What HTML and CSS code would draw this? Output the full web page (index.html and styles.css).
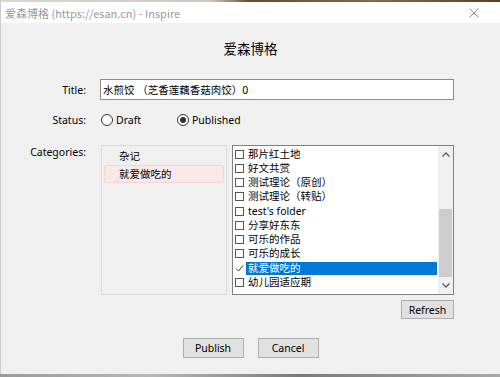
FILE: index.html
```html
<!DOCTYPE html>
<html lang="zh-CN">

<head>
  <meta charset="UTF-8">
  <title>爱森博格 - Inspire</title>
  <link rel="stylesheet" href="styles.css">
</head>

<body>
  <div class="window">
    <div class="desk"></div>

    <div class="titlebar">
      <span class="caption">爱森博格 (https://esan.cn) - Inspire</span>
      <svg class="close" width="10" height="10" viewBox="0 0 10 10">
        <path d="M0.5 0.5 L9.5 9.5 M9.5 0.5 L0.5 9.5" stroke="#8c8c8c" stroke-width="1" fill="none" />
      </svg>
    </div>

    <div class="dialog">
      <h1>爱森博格</h1>

      <div class="row title-row">
        <div class="label">Title:</div>
        <input class="field" type="text" value="水煎饺 （芝香莲藕香菇肉饺）0">
      </div>

      <div class="row status-row">
        <div class="label">Status:</div>
        <div class="radios">
          <span class="radio"><span class="dot"></span>Draft</span>
          <span class="radio checked"><span class="dot"></span>Published</span>
        </div>
      </div>

      <div class="row cat-row">
        <div class="label">Categories:</div>
        <div class="cats">
          <div class="lists">
            <div class="picked">
              <div class="pick">杂记</div>
              <div class="pick active">就爱做吃的</div>
            </div>
            <div class="checklist">
              <div class="items">
                <div class="item"><span class="box"></span><span class="text">那片红土地</span></div>
                <div class="item"><span class="box"></span><span class="text">好文共赏</span></div>
                <div class="item"><span class="box"></span><span class="text">测试理论（原创）</span></div>
                <div class="item"><span class="box"></span><span class="text">测试理论（转贴）</span></div>
                <div class="item"><span class="box"></span><span class="text">test's folder</span></div>
                <div class="item"><span class="box"></span><span class="text">分享好东东</span></div>
                <div class="item"><span class="box"></span><span class="text">可乐的作品</span></div>
                <div class="item"><span class="box"></span><span class="text">可乐的成长</span></div>
                <div class="item selected">
                  <span class="box on">
                    <svg width="9" height="9" viewBox="0 0 9 9">
                      <path d="M1 4.5 L3.5 7 L8 1.5" stroke="#333" stroke-width="1" fill="none" />
                    </svg>
                  </span>
                  <span class="text">就爱做吃的</span>
                </div>
                <div class="item"><span class="box"></span><span class="text">幼儿园适应期</span></div>
              </div>
              <div class="scrollbar">
                <div class="arrow">
                  <svg width="8" height="5" viewBox="0 0 8 5">
                    <path d="M0.5 4.5 L4 1 L7.5 4.5" stroke="#606060" stroke-width="1.4" fill="none" />
                  </svg>
                </div>
                <div class="track">
                  <div class="thumb"></div>
                </div>
                <div class="arrow">
                  <svg width="8" height="5" viewBox="0 0 8 5">
                    <path d="M0.5 0.5 L4 4 L7.5 0.5" stroke="#606060" stroke-width="1.4" fill="none" />
                  </svg>
                </div>
              </div>
            </div>
          </div>
          <div class="refresh-row">
            <button class="btn refresh">Refresh</button>
          </div>
        </div>
      </div>

      <div class="actions">
        <button class="btn wide">Publish</button>
        <button class="btn wide">Cancel</button>
      </div>
    </div>

    <div class="taskbar"></div>
  </div>
</body>

</html>
```

FILE: styles.css
```css
html,
body {
  margin: 0;
  padding: 0;
  background: #f0f0f0;
}

body {
  font-family: "Noto Sans", "Noto Sans CJK SC", sans-serif;
  font-size: 10.5px;
  color: #000;
}

.window {
  width: 500px;
  height: 377px;
  display: flex;
  flex-direction: column;
  overflow: hidden;
}

.desk {
  height: 2px;
  background: linear-gradient(to right, #d9d6d0 0, #cfc9c0 42%, #6a4a2c 50%, #8a6a40 75%, #5c3e22 100%);
}

.titlebar {
  height: 21px;
  background: #fff;
  display: flex;
  align-items: center;
  justify-content: space-between;
  padding: 0 21px 0 4px;
  border-left: 1px solid #c8ccd0;
}

.caption {
  color: #9a9a9a;
  font-size: 11px;
  font-family: "Noto Sans CJK SC", sans-serif;
}

.dialog {
  flex: 1;
  border-left: 1px solid #c8ccd0;
  padding-top: 15px;
}

h1 {
  margin: 0;
  font-size: 13.5px;
  font-weight: normal;
  line-height: 20px;
  text-align: center;
  font-family: "Noto Sans CJK SC", sans-serif;
}

.row {
  display: flex;
  align-items: center;
}

.label {
  width: 85px;
  margin-right: 14px;
  text-align: right;
  line-height: 14px;
}

.title-row {
  margin-top: 21px;
}

.field {
  box-sizing: border-box;
  width: 354px;
  height: 21px;
  margin: 0;
  padding: 0 2px;
  border: 1px solid #8c8c8c;
  background: #fff;
  font-family: "Noto Sans", "Noto Sans CJK SC", sans-serif;
  font-size: 10.5px;
  color: #000;
  outline: none;
}

.status-row {
  margin-top: 12px;
  height: 16px;
}

.radios {
  display: flex;
  align-items: center;
  margin-left: 1px;
}

.radio {
  display: flex;
  align-items: center;
  width: 76px;
}

.dot {
  box-sizing: border-box;
  width: 12px;
  height: 12px;
  margin-right: 3px;
  border: 1px solid #333;
  border-radius: 50%;
  background: #fff;
  display: flex;
  align-items: center;
  justify-content: center;
}

.radio.checked .dot::after {
  content: "";
  width: 6px;
  height: 6px;
  border-radius: 50%;
  background: #333;
}

.cat-row {
  margin-top: 17px;
  align-items: flex-start;
}

.cats {
  width: 354px;
}

.lists {
  display: flex;
  height: 150px;
}

.picked {
  box-sizing: border-box;
  width: 126px;
  margin-left: 1px;
  margin-right: 5px;
  padding: 1px 1px;
  border: 1px solid #dcdcdc;
  background: #f0f0f0;
  font-family: "Noto Sans CJK SC", sans-serif;
}

.pick {
  box-sizing: border-box;
  height: 18px;
  line-height: 16px;
  padding-left: 14px;
  margin: 0 1px;
  border: 1px solid transparent;
}

.pick.active {
  background: #fde8e8;
  border-color: #f6d4d4;
  border-radius: 2px;
}

.checklist {
  box-sizing: border-box;
  flex: 1;
  display: flex;
  border: 1px solid #828282;
  background: #fff;
}

.items {
  flex: 1;
  padding: 1px 0 0 2px;
}

.item {
  display: flex;
  align-items: center;
  height: 14.25px;
}

.box {
  box-sizing: border-box;
  width: 9px;
  height: 9px;
  border: 1px solid #555;
  background: #fff;
  margin-right: 2px;
  display: flex;
  align-items: center;
  justify-content: center;
  flex: none;
}

.box.on {
  border: 0;
}

.text {
  flex: 1;
  padding-left: 2px;
  line-height: 13px;
  white-space: nowrap;
}

.item.selected .text {
  background: #0078d7;
  color: #fff;
}

.scrollbar {
  width: 15px;
  display: flex;
  flex-direction: column;
  background: #f0f0f0;
  margin-left: 1px;
}

.arrow {
  height: 17px;
  display: flex;
  align-items: center;
  justify-content: center;
}

.track {
  flex: 1;
}

.thumb {
  margin: 46px 1px 0;
  height: 68px;
  background: #cdcdcd;
}

.refresh-row {
  display: flex;
  justify-content: flex-end;
  margin-top: 5px;
}

.btn {
  box-sizing: border-box;
  margin: 0;
  padding: 0;
  border: 1px solid #adadad;
  background: #e1e1e1;
  font-family: "Noto Sans", sans-serif;
  font-size: 10.5px;
  color: #000;
}

.refresh {
  width: 53px;
  height: 19px;
}

.actions {
  display: flex;
  justify-content: center;
  gap: 14px;
  margin-top: 19px;
}

.wide {
  width: 61px;
  height: 20px;
}

.taskbar {
  height: 3px;
  background: linear-gradient(to right, #9a9a9a, #b8b8b8 30%, #7a7a7a 60%, #a8a8a8);
}
```
